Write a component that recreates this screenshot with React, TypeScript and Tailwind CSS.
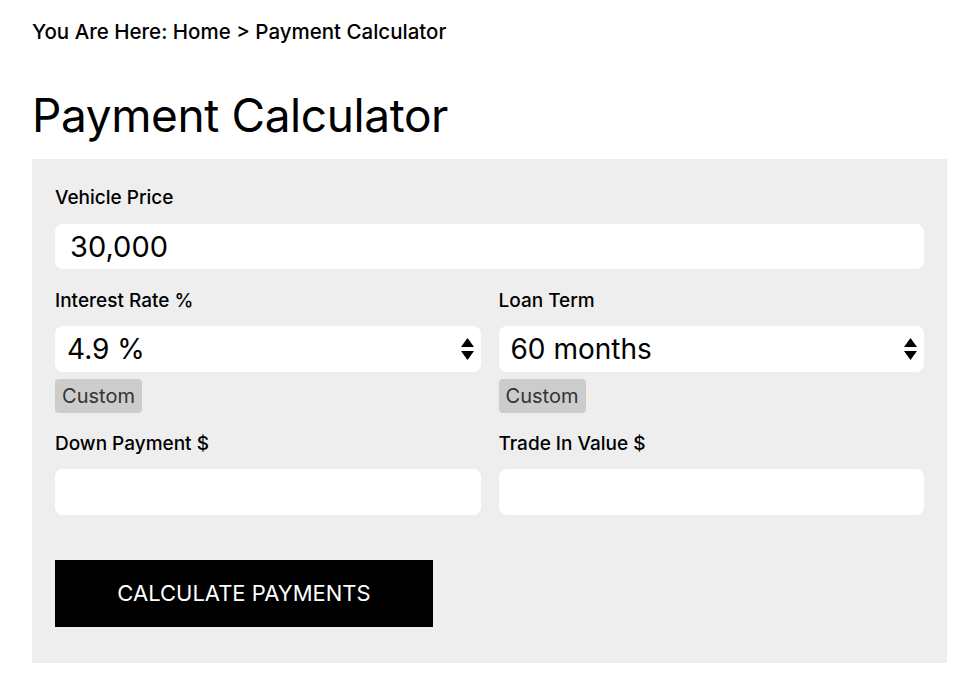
import React from "react";

const font = { fontFamily: "Inter, 'Noto Sans', sans-serif" };

function Arrows() {
  return (
    <svg width="13" height="22" viewBox="0 0 13 22" className="shrink-0">
      <path d="M6.5 0 L13 9 L0 9 Z" fill="#000" />
      <path d="M0 13 L13 13 L6.5 22 Z" fill="#000" />
    </svg>
  );
}

function Label({ children }: { children: React.ReactNode }) {
  return <div className="h-8 text-[19px] leading-8 font-medium text-black">{children}</div>;
}

function SelectBox({ value }: { value: string }) {
  return (
    <div className="flex h-[46px] items-center justify-between rounded-lg bg-white pl-3 pr-[7px]">
      <span className="text-[28px] text-black">{value}</span>
      <Arrows />
    </div>
  );
}

function Chip() {
  return (
    <button className="mt-[7px] h-[34px] w-[87px] rounded bg-[#cccccc] text-[20px] text-[#333]">
      Custom
    </button>
  );
}

export default function App() {
  return (
    <main className="min-h-screen bg-white px-8 pt-[20px]" style={font}>
      {/* Breadcrumb */}
      <div className="h-6 text-[20.5px] leading-6 font-medium text-black">
        You Are Here: Home &gt; Payment Calculator
      </div>

      <h1 className="mt-[47px] text-[46px] leading-[48px] font-normal tracking-[-0.4px] text-black">
        Payment Calculator
      </h1>

      <section className="mt-[20px] w-[915px] bg-[#eeeeee] px-[23px] pt-[23px] pb-9">
        <Label>Vehicle Price</Label>
        <div className="mt-[10px] flex h-[45px] items-center rounded-lg bg-white px-[15px] text-[29px] text-black">
          30,000
        </div>

        <div className="mt-4 grid grid-cols-2 gap-x-[18px]">
          <div>
            <Label>Interest Rate %</Label>
            <div className="mt-[9px]">
              <SelectBox value="4.9 %" />
            </div>
            <Chip />
          </div>
          <div>
            <Label>Loan Term</Label>
            <div className="mt-[9px]">
              <SelectBox value="60 months" />
            </div>
            <Chip />
          </div>

          <div className="mt-[15px]">
            <Label>Down Payment $</Label>
            <div className="mt-[9px] h-[46px] rounded-lg bg-white" />
          </div>
          <div className="mt-[15px]">
            <Label>Trade In Value $</Label>
            <div className="mt-[9px] h-[46px] rounded-lg bg-white" />
          </div>
        </div>

        <button className="mt-[45px] h-[67px] w-[378px] bg-black text-[22px] text-white">
          CALCULATE PAYMENTS
        </button>
      </section>
    </main>
  );
}
